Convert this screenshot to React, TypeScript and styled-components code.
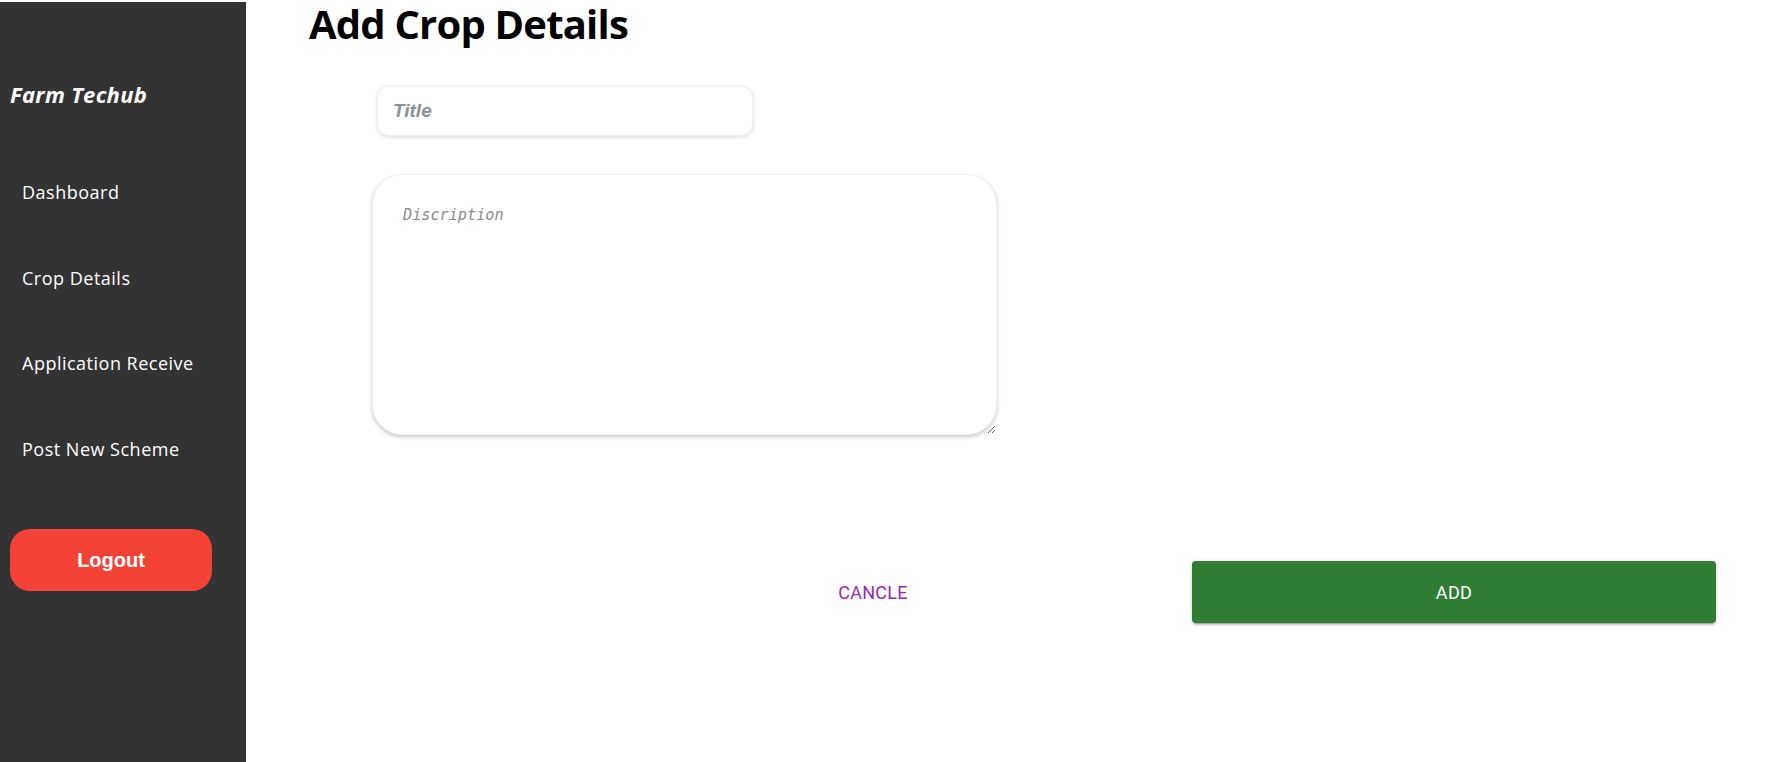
import React from "react";
import styled, { createGlobalStyle } from "styled-components";

const GlobalStyle = createGlobalStyle`
  html, body { margin: 0; padding: 0; background: #ffffff; }
  body { font-family: "Open Sans", "Noto Sans", sans-serif; }
  * { box-sizing: border-box; }
`;

const Page = styled.div`
  display: flex;
  width: 1772px;
  height: 762px;
  overflow: hidden;
`;

const Sidebar = styled.aside`
  width: 246px;
  flex: 0 0 246px;
  margin-top: 2px;
  height: 760px;
  background: #333333;
  display: flex;
  flex-direction: column;
  align-items: flex-start;
`;

const Brand = styled.div`
  margin: 77px 0 0 10px;
  font-family: "Open Sans", sans-serif;
  font-weight: 700;
  font-style: italic;
  font-size: 22px;
  line-height: 30px;
  color: #ffffff;
  letter-spacing: 0.3px;
`;

const NavList = styled.nav`
  display: flex;
  flex-direction: column;
  gap: 61.7px;
  margin: 71px 0 0 22px;
`;

const NavItem = styled.a`
  font-family: "Open Sans", sans-serif;
  font-size: 18px;
  line-height: 24px;
  color: #ffffff;
  text-decoration: none;
  letter-spacing: 0.5px;
`;

const LogoutButton = styled.button`
  margin: 68px 0 0 10px;
  width: 202px;
  height: 62px;
  border: none;
  border-radius: 20px;
  background: #f44336;
  color: #ffffff;
  font-family: "Liberation Sans", Arial, sans-serif;
  font-weight: 700;
  font-size: 20px;
  cursor: pointer;
`;

const Main = styled.main`
  flex: 1;
  padding-left: 63px;
  display: flex;
  flex-direction: column;
  align-items: flex-start;
`;

const Heading = styled.h1`
  margin: 0;
  font-family: "Open Sans", sans-serif;
  font-weight: 700;
  font-size: 40px;
  line-height: 48px;
  color: #000000;
  letter-spacing: -0.8px;
`;

const TitleInput = styled.input`
  margin: 38px 0 0 68px;
  width: 376px;
  height: 50px;
  border: 1px solid #f2f2f2;
  border-radius: 12px;
  box-shadow: 0 1px 4px rgba(0, 0, 0, 0.14);
  padding: 0 15px;
  outline: none;
  font-family: "Liberation Sans", Arial, sans-serif;
  font-weight: 700;
  font-style: italic;
  font-size: 19px;
  color: #333;
  &::placeholder {
    color: #8a8f98;
  }
`;

const DescArea = styled.textarea`
  display: block;
  margin: 38px 0 0 63px;
  width: 625px;
  height: 261px;
  border: 1px solid #f0f0f0;
  border-radius: 30px;
  box-shadow: 0 2px 4px rgba(0, 0, 0, 0.22);
  padding: 31px 30px;
  outline: none;
  resize: both;
  font-family: "DejaVu Sans Mono", "Liberation Mono", monospace;
  font-style: italic;
  font-size: 15.2px;
  color: #333;
  &::placeholder {
    color: #8a8a8a;
  }
`;

const ButtonRow = styled.div`
  display: grid;
  grid-template-columns: 524px 524px;
  gap: 57px;
  margin: 126px 0 0 302px;
`;

const ActionButton = styled.button<{ $variant: "text" | "contained" }>`
  height: 62px;
  border: none;
  border-radius: 4px;
  font-family: Roboto, "Liberation Sans", sans-serif;
  font-weight: 400;
  font-size: 18px;
  letter-spacing: 0.3px;
  text-transform: uppercase;
  cursor: pointer;
  background: ${(p) => (p.$variant === "contained" ? "#2e7d32" : "transparent")};
  color: ${(p) => (p.$variant === "contained" ? "#ffffff" : "#9c27b0")};
  box-shadow: ${(p) =>
    p.$variant === "contained"
      ? "0 3px 1px -2px rgba(0,0,0,0.2), 0 2px 2px 0 rgba(0,0,0,0.14), 0 1px 5px 0 rgba(0,0,0,0.12)"
      : "none"};
`;

export default function App() {
  return (
    <>
      <GlobalStyle />
      <Page>
        <Sidebar>
          <Brand>Farm Techub</Brand>
          <NavList>
            <NavItem href="#">Dashboard</NavItem>
            <NavItem href="#">Crop Details</NavItem>
            <NavItem href="#">Application Receive</NavItem>
            <NavItem href="#">Post New Scheme</NavItem>
          </NavList>
          <LogoutButton>Logout</LogoutButton>
        </Sidebar>
        <Main>
          <Heading>Add Crop Details</Heading>
          <TitleInput placeholder="Title" />
          <DescArea placeholder="Discription" />
          <ButtonRow>
            <ActionButton $variant="text">Cancle</ActionButton>
            <ActionButton $variant="contained">Add</ActionButton>
          </ButtonRow>
        </Main>
      </Page>
    </>
  );
}
